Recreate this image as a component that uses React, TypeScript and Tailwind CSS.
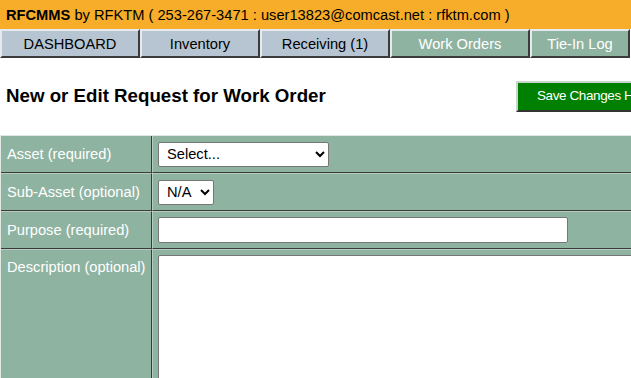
import React from "react";

const navItems = [
  { label: "DASHBOARD", w: "w-[140px]", green: false },
  { label: "Inventory", w: "w-[120px]", green: false },
  { label: "Receiving (1)", w: "w-[130px]", green: false },
  { label: "Work Orders", w: "w-[140px]", green: true },
  { label: "Tie-In Log", w: "w-[100px]", green: true },
];

export default function App() {
  return (
    <div className="w-[631px] h-[378px] overflow-hidden bg-white text-black" style={{ fontFamily: '"Liberation Sans", Arial, sans-serif' }}>
      <div className="h-[29px] bg-[#f7ad29] flex items-center pl-[6px] text-[14.67px] whitespace-nowrap">
        <span className="font-bold">RFCMMS</span>
        <span>&nbsp;by RFKTM ( 253-267-3471 : user13823@comcast.net : rfktm.com )</span>
      </div>
      <div className="flex h-[29px]">
        {navItems.map((n) => (
          <div
            key={n.label}
            className={`${n.w} shrink-0 h-[29px] flex items-center justify-center text-[14.67px] border-2 border-t-[#e4eaee] border-l-[#e4eaee] border-r-[#3b3b3b] border-b-[#3b3b3b] ${n.green ? "bg-[#8fb3a1] text-white" : "bg-[#b6c5d1] text-black"}`}
          >
            {n.label}
          </div>
        ))}
      </div>
      <div className="flex items-center h-[77px] pl-[6px]">
        <div className="shrink-0 font-bold text-[18.72px] w-[510px] whitespace-nowrap">New or Edit Request for Work Order</div>
        <div className="shrink-0 h-[31px] bg-[#008000] text-white text-[13.5px] tracking-[-0.4px] pl-[19px] pr-[10px] flex items-center whitespace-nowrap border-2 border-t-[#c9d6cc] border-l-[#c9d6cc] border-r-[#333] border-b-[#333]">
          Save Changes Here
        </div>
      </div>
      <div className="grid grid-cols-[151px_1fr] bg-[#8fb3a1] border-t border-l border-[#dfe8e3] text-[14.67px] w-[700px]">
        <div className="h-[37px] flex items-center pl-[6px] text-white border-r border-r-[#3a3a3a] border-b border-b-[#3a3a3a]">Asset (required)</div>
        <div className="h-[37px] flex items-center pl-[5px] border-l border-l-[#b8ccc1] border-b border-b-[#3a3a3a]">
          <select className="w-[171px] h-[25px] bg-white border border-[#767676] rounded-[2px] text-[14.67px] pl-[4px] text-black">
            <option>Select...</option>
          </select>
        </div>
        <div className="h-[38px] flex items-center pl-[6px] text-white border-t border-t-[#b8ccc1] border-r border-r-[#3a3a3a] border-b border-b-[#3a3a3a]">Sub-Asset (optional)</div>
        <div className="h-[38px] flex items-center pl-[5px] border-t border-t-[#b8ccc1] border-l border-l-[#b8ccc1] border-b border-b-[#3a3a3a]">
          <select className="w-[56px] h-[25px] bg-white border border-[#767676] rounded-[2px] text-[14.67px] pl-[4px] text-black">
            <option>N/A</option>
          </select>
        </div>
        <div className="h-[38px] flex items-center pl-[6px] text-white border-t border-t-[#b8ccc1] border-r border-r-[#3a3a3a] border-b border-b-[#3a3a3a]">Purpose (required)</div>
        <div className="h-[38px] flex items-center pl-[5px] border-t border-t-[#b8ccc1] border-l border-l-[#b8ccc1] border-b border-b-[#3a3a3a]">
          <input className="w-[410px] h-[26px] bg-white border border-[#767676] rounded-[2px]" />
        </div>
        <div className="h-[140px] pt-[6px] pl-[6px] text-white border-t border-t-[#b8ccc1] border-r border-r-[#3a3a3a]">Description (optional)</div>
        <div className="h-[140px] pl-[5px] pt-[5px] border-t border-t-[#b8ccc1] border-l border-l-[#b8ccc1]">
          <textarea className="w-[520px] h-[200px] bg-white border border-[#767676] rounded-[2px] resize-none block" />
        </div>
      </div>
    </div>
  );
}
